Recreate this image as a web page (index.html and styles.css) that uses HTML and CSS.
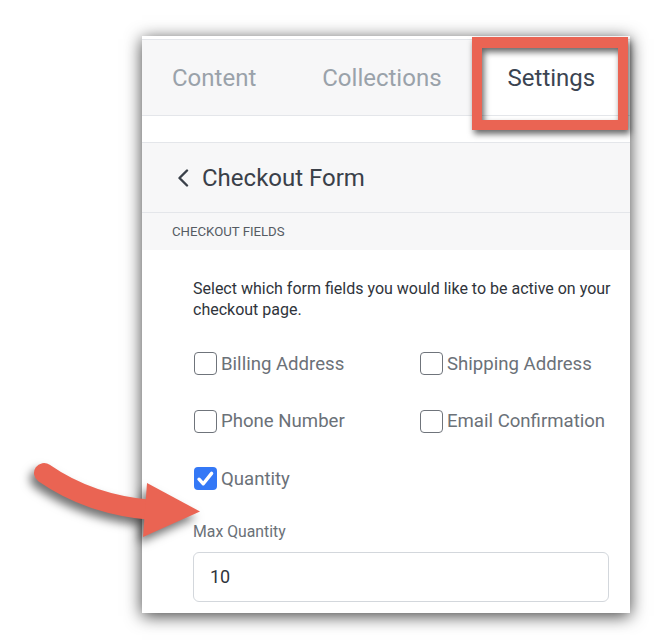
FILE: index.html
```html
<!DOCTYPE html>
<html lang="en">
<head>
<meta charset="utf-8">
<title>Checkout Form Settings</title>
<link rel="stylesheet" href="styles.css">
</head>
<body>
<div class="panel">
  <div class="tabs">
    <div class="tab">Content</div>
    <div class="tab">Collections</div>
    <div class="tab tab-active">Settings</div>
  </div>
  <div class="spacer"></div>
  <div class="header">
    <svg class="chevron" width="12" height="18" viewBox="0 0 12 18"><polyline points="10,1.5 2.5,9 10,16.5" fill="none" stroke="#3a4049" stroke-width="2.4" stroke-linecap="round" stroke-linejoin="round"/></svg>
    <span class="title">Checkout Form</span>
  </div>
  <div class="section">CHECKOUT FIELDS</div>
  <div class="content">
    <p class="desc">Select which form fields you would like to be active on your checkout page.</p>
    <div class="fields">
      <label class="field"><span class="box"></span><span class="label">Billing Address</span></label>
      <label class="field"><span class="box"></span><span class="label">Shipping Address</span></label>
      <label class="field"><span class="box"></span><span class="label">Phone Number</span></label>
      <label class="field"><span class="box"></span><span class="label">Email Confirmation</span></label>
      <label class="field"><span class="box box-on"><svg width="23" height="23" viewBox="0 0 23 23"><path d="M5 12.2 L9.3 16.8 L17.6 6.4" fill="none" stroke="#fff" stroke-width="3.4" stroke-linecap="round" stroke-linejoin="round"/></svg></span><span class="label">Quantity</span></label>
    </div>
    <div class="max-label">Max Quantity</div>
    <div class="input">10</div>
  </div>
</div>
<div class="highlight"></div>
<svg class="arrow" width="190" height="95" viewBox="20 455 190 95">
  <path d="M44 473 Q90 505 152 510" fill="none" stroke="#ea6453" stroke-width="20" stroke-linecap="round"/>
  <polygon points="147,483 200,511.5 143,537" fill="#ea6453"/>
</svg>
</body>
</html>
```

FILE: styles.css
```css
html, body {
  margin: 0;
  padding: 0;
  background: #ffffff;
}
body {
  width: 664px;
  height: 644px;
  overflow: hidden;
  position: relative;
  font-family: Roboto, "Liberation Sans", sans-serif;
}
.panel {
  width: 488px;
  height: 577px;
  margin: 36px 0 0 142px;
  background: #ffffff;
  box-shadow: 0 3px 16px rgba(0, 0, 0, 0.75);
  overflow: hidden;
}
.tabs {
  margin-top: 3px;
  height: 75px;
  background: #f7f7f8;
  border-top: 1px solid #e4e6ea;
  border-bottom: 1px solid #e4e6ea;
  display: flex;
  padding-left: 30px;
  gap: 66px;
}
.tab {
  display: flex;
  align-items: center;
  font-size: 24px;
  color: #9aa2aa;
}
.tab-active {
  color: #3b4451;
  background: #ffffff;
  padding: 0 34px;
  margin-left: -34px;
  flex: 1;
}
.spacer {
  height: 26px;
  background: #ffffff;
}
.header {
  height: 69px;
  background: #f7f7f8;
  border-top: 1px solid #e4e6ea;
  border-bottom: 1px solid #e4e6ea;
  display: flex;
  align-items: center;
  padding-left: 35px;
  gap: 13px;
}
.chevron {
  display: block;
}
.title {
  font-size: 24px;
  color: #3a4049;
}
.section {
  height: 37px;
  background: #f7f7f8;
  display: flex;
  align-items: center;
  padding-left: 30px;
  font-size: 13.2px;
  color: #555b63;
}
.content {
  padding: 28.3px 21px 0 51px;
}
.desc {
  margin: 0 -4px 0 0;
  font-size: 16px;
  line-height: 21px;
  color: #2f343b;
}
.fields {
  margin-top: 31.7px;
  display: grid;
  grid-template-columns: 226px 1fr;
  row-gap: 33.5px;
}
.field {
  display: flex;
  align-items: center;
  gap: 4px;
  height: 24px;
}
.box {
  width: 23px;
  height: 23px;
  box-sizing: border-box;
  border: 1.5px solid #6f747b;
  border-radius: 4px;
  margin-left: 1px;
  display: block;
}
.box-on {
  border: none;
  background: #3478f6;
}
.box-on svg {
  display: block;
}
.label {
  font-size: 18.6px;
  color: #6b7178;
}
.max-label {
  margin-top: 30.7px;
  font-size: 15.8px;
  line-height: 19px;
  color: #6b7178;
}
.input {
  margin-top: 11.3px;
  height: 50px;
  box-sizing: border-box;
  border: 1px solid #d3d7dc;
  border-radius: 6px;
  display: flex;
  align-items: center;
  padding-left: 16px;
  font-size: 18px;
  color: #2f343b;
}
.highlight {
  position: absolute;
  left: 472px;
  top: 37px;
  width: 156px;
  height: 93px;
  box-sizing: border-box;
  border: 10px solid #ea6453;
  border-top-width: 11px;
  filter: drop-shadow(2px 4px 3px rgba(0, 0, 0, 0.6));
}
.arrow {
  position: absolute;
  left: 20px;
  top: 455px;
  overflow: visible;
  filter: drop-shadow(-4px 6px 5px rgba(0, 0, 0, 0.55));
}
```
